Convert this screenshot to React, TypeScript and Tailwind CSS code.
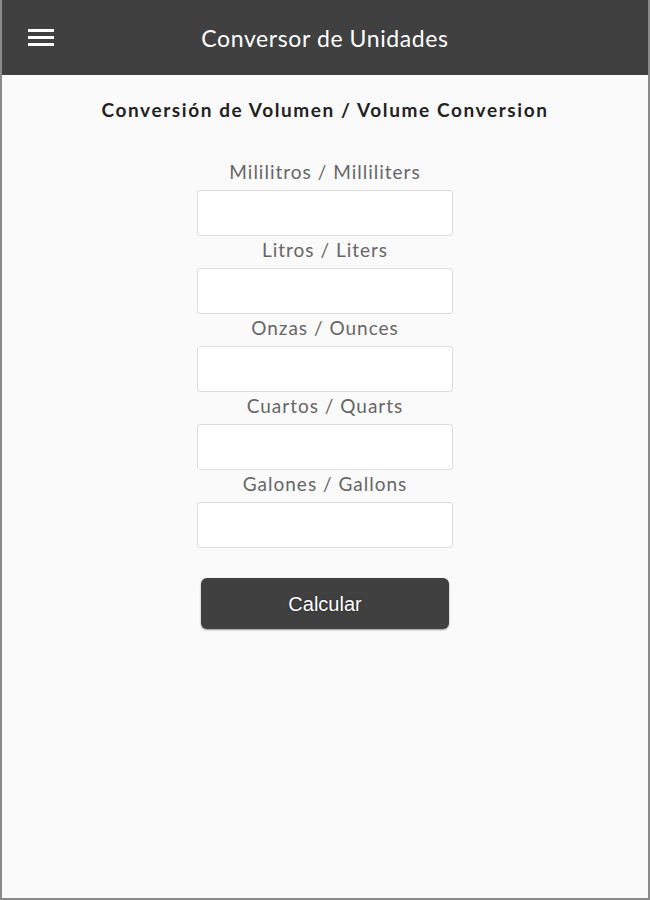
const fields = [
  "Mililitros / Milliliters",
  "Litros / Liters",
  "Onzas / Ounces",
  "Cuartos / Quarts",
  "Galones / Gallons",
]

export default function App() {
  return (
    <div className="w-[650px] h-[900px] flex flex-col bg-[#fafafa] border-l-2 border-r-2 border-b-2 border-[#8a8a8a] font-['Lato',sans-serif]">
      {/* HEADER */}
      <div className="h-[75px] bg-[#404040] flex items-center relative shrink-0">
        <div className="absolute left-[26px] top-[29px] flex flex-col gap-[4px]">
          <span className="block w-[26px] h-[3px] bg-white" />
          <span className="block w-[26px] h-[3px] bg-white" />
          <span className="block w-[26px] h-[3px] bg-white" />
        </div>
        <h1 className="w-full text-center text-white text-[23px] tracking-[0.6px] mt-[1px]">Conversor de Unidades</h1>
      </div>

      {/* CONTENT */}
      <div className="flex flex-col items-center">
        <h2 className="mt-[22px] text-[19px] font-bold text-[#222] leading-[26px] tracking-[1.6px]">
          Conversión de Volumen / Volume Conversion
        </h2>
        <div className="mt-[35px] flex flex-col items-center">
          {fields.map((f) => (
            <div key={f} className="flex flex-col items-center">
              <label className="text-[19px] text-[#666] leading-[24px] h-[32px] pt-[2px] tracking-[1px]">{f}</label>
              <input
                type="text"
                className="w-[256px] h-[46px] bg-white border border-[#dcdcdc] rounded-[3px] outline-none"
              />
            </div>
          ))}
        </div>
        <button className="mt-[30px] w-[248px] h-[51px] bg-[#404040] rounded-[6px] text-white text-[20px] font-['Liberation_Sans',sans-serif] shadow-[0_1px_2px_rgba(0,0,0,0.4)] [text-shadow:0_0_2px_rgba(0,0,0,0.6)]">
          Calcular
        </button>
      </div>
    </div>
  )
}
